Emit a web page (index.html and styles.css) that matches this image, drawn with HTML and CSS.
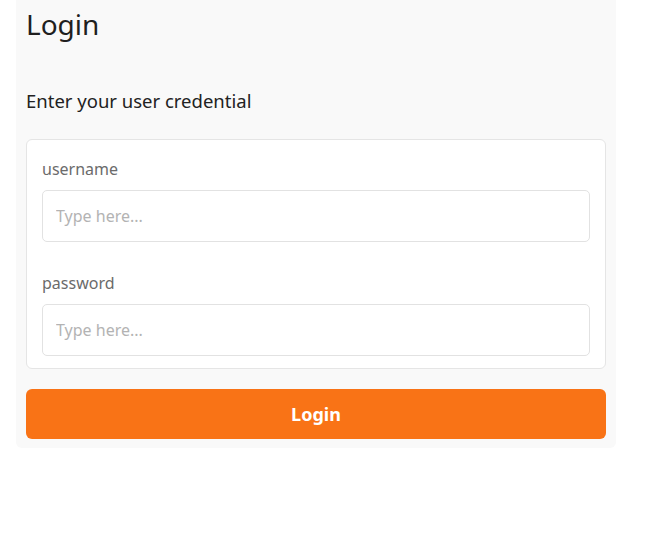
FILE: index.html
```html
<!DOCTYPE html>
<html lang="en">
<head>
<meta charset="utf-8">
<title>Login</title>
<link rel="stylesheet" href="styles.css">
</head>
<body>
  <div class="panel">
    <h1 class="title">Login</h1>
    <p class="subtitle">Enter your user credential</p>
    <form class="card">
      <label class="label" for="username">username</label>
      <input class="input" id="username" type="text" placeholder="Type here...">
      <label class="label label-second" for="password">password</label>
      <input class="input" id="password" type="password" placeholder="Type here...">
    </form>
    <button class="btn" type="button">Login</button>
  </div>
</body>
</html>
```
FILE: styles.css
```css
* { box-sizing: border-box; }
html, body { margin: 0; padding: 0; background: #ffffff; }
body { font-family: "Noto Sans", "Open Sans", sans-serif; color: #222; }

.panel {
  margin-left: 16px;
  width: 600px;
  padding: 0 10px 9px;
  background: #f9f9f9;
  border-radius: 0 0 6px 6px;
  display: flex;
  flex-direction: column;
}

.title {
  margin: 0;
  font-size: 28px;
  line-height: 48px;
  font-weight: 400;
  color: #1f1f1f;
}

.subtitle {
  margin: 41px 0 0;
  font-size: 18.5px;
  line-height: 24px;
  color: #222;
}

.card {
  margin-top: 26px;
  background: #fff;
  border: 1px solid #e5e5e5;
  border-radius: 6px;
  padding: 17px 15px 12px;
  display: flex;
  flex-direction: column;
}

.label {
  font-size: 16px;
  line-height: 24px;
  color: #6b6b6b;
}

.label-second { margin-top: 29px; }

.input {
  margin-top: 9px;
  height: 52px;
  border: 1px solid #e2e2e2;
  border-radius: 5px;
  padding: 0 13px;
  font-family: inherit;
  font-size: 16px;
  color: #222;
  background: #fff;
  outline: none;
}
.input::placeholder { color: #b3b3b3; }

.btn {
  margin-top: 20px;
  height: 50px;
  border: none;
  border-radius: 6px;
  background: #f97316;
  color: #fff;
  font-family: inherit;
  font-size: 18px;
  font-weight: 700;
  cursor: pointer;
}
```
